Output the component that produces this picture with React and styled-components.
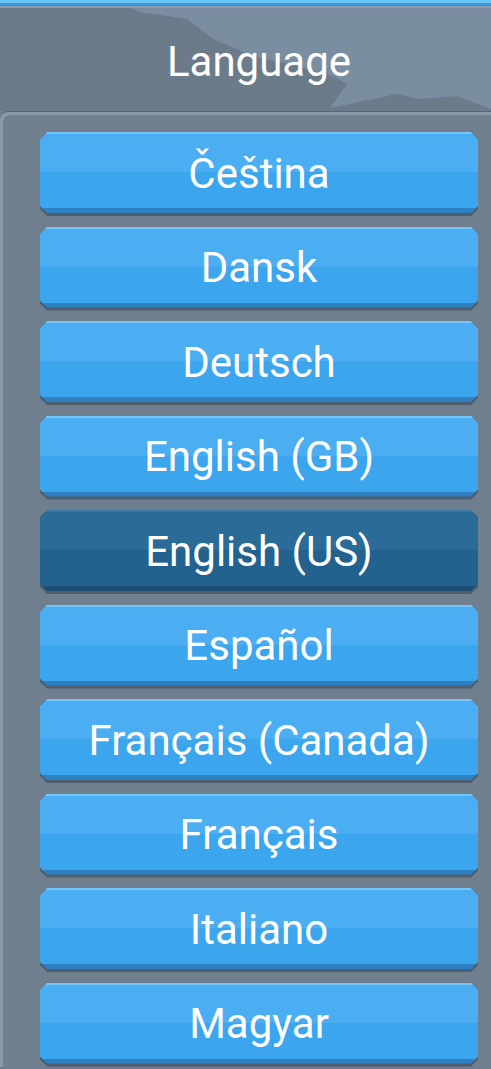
import React from 'react';
import styled, { createGlobalStyle } from 'styled-components';

const GlobalStyle = createGlobalStyle`
  html, body {
    margin: 0;
    padding: 0;
    background: #6f7e8d;
  }
`;

const Screen = styled.div`
  position: relative;
  height: 1069px;
  overflow: hidden;
  background: #6f7e8d;
  font-family: Roboto, "Noto Sans", sans-serif;
  color: #fff;
`;

const TopBar = styled.div`
  height: 6px;
  background: linear-gradient(#6cc6f8 0, #6cc6f8 50%, #3c96da 50%, #3c96da 100%);
`;

const Header = styled.header`
  position: relative;
  display: flex;
  align-items: center;
  justify-content: center;
  box-sizing: border-box;
  height: 105px;
  padding: 4px 13px 0 40px;
  border-top: 2px solid #8a9bab;
  background: #6c7b8a;
  overflow: hidden;
`;

const Scenery = styled.svg`
  position: absolute;
  inset: 0;
  width: 100%;
  height: 100%;
`;

const Title = styled.h1`
  position: relative;
  margin: 0;
  font-weight: 400;
  font-size: 42px;
  line-height: 1;
`;

const Panel = styled.main`
  display: flex;
  flex-direction: column;
  gap: 10.5px;
  box-sizing: border-box;
  padding: 20px 13px 0 40px;
  border-top: 1px solid #55667a;
  border-top-left-radius: 8px;
  background: #707f8e;
  box-shadow: inset 3px 3px 0 #8b99a7;
`;

const chamfer = `polygon(7px 0, calc(100% - 7px) 0, 100% 7px, 100% calc(100% - 7px), calc(100% - 7px) 100%, 7px 100%, 0 calc(100% - 7px), 0 7px)`;

const Shell = styled.div`
  flex: none;
  height: 84px;
  padding-bottom: 3px;
  box-sizing: border-box;
  background: #4e5e6f;
  clip-path: ${chamfer};
`;

const Face = styled.button`
  display: flex;
  align-items: center;
  justify-content: center;
  box-sizing: border-box;
  width: 100%;
  height: 100%;
  padding: 7px 0 5px;
  border: none;
  clip-path: ${chamfer};
  color: #fff;
  font-family: inherit;
  font-size: 42px;
  font-weight: 400;
  line-height: 1;
  cursor: pointer;
  background: ${({ $active }) =>
    $active
      ? `linear-gradient(#3a7aa6 0, #3a7aa6 2px, #2b6b98 2px, #2b6b98 49%, #23628f 49%, #23628f calc(100% - 5px), #1b4f76 calc(100% - 5px))`
      : `linear-gradient(#72c6f8 0, #72c6f8 2px, #4caef2 2px, #4caef2 49%, #3ba5ee 49%, #3ba5ee calc(100% - 5px), #2f80c2 calc(100% - 5px))`};
`;

const languages = [
  'Čeština',
  'Dansk',
  'Deutsch',
  'English (GB)',
  'English (US)',
  'Español',
  'Français (Canada)',
  'Français',
  'Italiano',
  'Magyar',
];

function App() {
  return (
    <Screen>
      <GlobalStyle />
      <TopBar />
      <Header>
        <Scenery viewBox="0 0 491 103" preserveAspectRatio="none">
          <polygon
            fill="#7a8da1"
            points="130,0 491,0 491,101 457,88 420,91 397,86 330,100 347,76 333,68 300,59 253,48 213,31 187,11 140,4"
          />
        </Scenery>
        <Title>Language</Title>
      </Header>
      <Panel>
        {languages.map((name) => (
          <Shell key={name}>
            <Face type="button" $active={name === 'English (US)'}>
              {name}
            </Face>
          </Shell>
        ))}
      </Panel>
    </Screen>
  );
}

export default App;
